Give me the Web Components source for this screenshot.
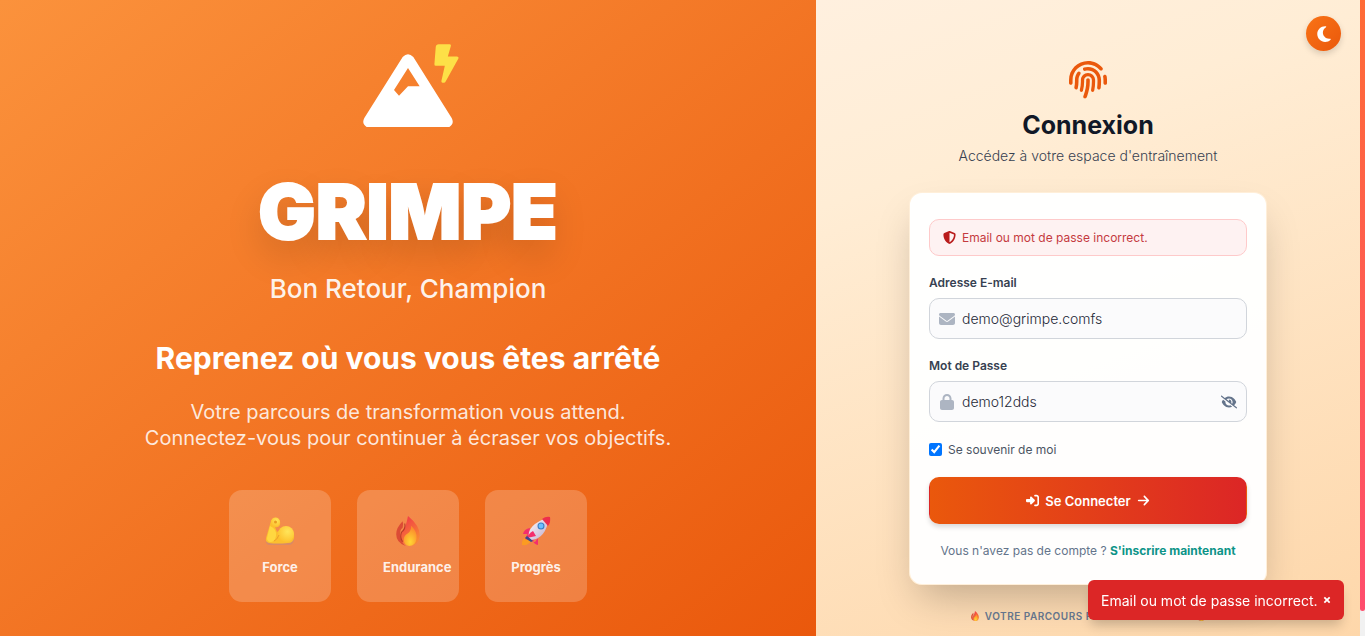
<!DOCTYPE html>
<html lang="fr">
<head>
<meta charset="utf-8">
<meta name="viewport" content="width=device-width, initial-scale=1">
<title>Grimpe – Connexion</title>
<style>
html, body { margin: 0; }
body { font-family: Inter, "Open Sans", sans-serif; overflow: hidden; background: #f1f1f1; }
</style>
</head>
<body>
<login-page></login-page>
<script>
/* Registers an element; setup fills the markup in before it goes live */
const define = (name, html, setup) => {
  const template = document.createElement('template');
  template.innerHTML = html;
  customElements.define(name, class extends HTMLElement {
    connectedCallback() {
      if (this.shadowRoot) return;
      const content = template.content.cloneNode(true);
      if (setup) setup(this, content);
      this.attachShadow({ mode: 'open' }).append(content);
    }
  });
};

const ICONS = {
  moon: ['0 0 384 512', '<path d="M223.5 32C100 32 0 132.3 0 256S100 480 223.5 480c60.6 0 115.5-24.2 155.8-63.4c5-4.9 6.3-12.5 3.1-18.7s-10.1-9.7-17-8.5c-9.8 1.7-19.8 2.6-30.1 2.6c-96.9 0-175.5-78.8-175.5-176c0-65.8 36-123.1 89.3-153.3c6.1-3.5 9.2-10.5 7.7-17.3s-7.3-11.9-14.3-12.5c-6.3-.5-12.6-.8-19-.8z"/>'],
  envelope: ['0 0 512 512', '<path d="M48 64C21.500 64 0 85.500 0 112c0 15.100 7.100 29.300 19.200 38.400L236.800 313.600c11.400 8.500 27 8.500 38.400 0L492.800 150.400c12.100-9.100 19.200-23.300 19.200-38.400c0-26.500-21.500-48-48-48H48zM0 176V384c0 35.300 28.700 64 64 64H448c35.300 0 64-28.700 64-64V176L294.400 339.200c-22.800 17.100-54 17.100-76.800 0L0 176z"/>'],
  lock: ['0 0 448 512', '<path d="M144 144v48H304V144c0-44.200-35.800-80-80-80s-80 35.800-80 80zM80 192V144C80 64.500 144.500 0 224 0s144 64.500 144 144v48h16c35.300 0 64 28.700 64 64V448c0 35.300-28.700 64-64 64H64c-35.300 0-64-28.700-64-64V256c0-35.300 28.700-64 64-64H80z"/>'],
  arrow: ['0 0 448 512', '<path d="M438.600 278.600c12.500-12.500 12.500-32.800 0-45.300l-160-160c-12.500-12.500-32.800-12.500-45.300 0s-12.500 32.800 0 45.300L338.800 224 32 224c-17.700 0-32 14.300-32 32s14.300 32 32 32l306.700 0L233.400 393.400c-12.500 12.500-12.500 32.800 0 45.300s32.800 12.500 45.300 0l160-160z"/>'],
  enter: ['0 0 512 512', '<path d="M217.900 105.900L340.700 228.700c7.200 7.200 11.300 17.100 11.300 27.300s-4.100 20.100-11.300 27.300L217.900 406.100c-6.400 6.400-15 9.900-24 9.900c-18.700 0-33.900-15.200-33.900-33.900l0-62.100L32 320c-17.700 0-32-14.300-32-32l0-64c0-17.700 14.300-32 32-32l128 0 0-62.100c0-18.700 15.200-33.900 33.900-33.900c9 0 17.600 3.600 24 9.900zM352 416l64 0c17.700 0 32-14.300 32-32l0-256c0-17.700-14.300-32-32-32l-64 0c-17.700 0-32-14.300-32-32s14.300-32 32-32l64 0c53 0 96 43 96 96l0 256c0 53-43 96-96 96l-64 0c-17.700 0-32-14.300-32-32s14.300-32 32-32z"/>'],
  shield: ['0 0 512 512', '<path d="M256 0c4.600 0 9.200 1 13.400 2.900L457.700 82.800c22 9.300 38.400 31 38.300 57.200c-.5 99.200-41.300 280.700-213.600 363.200c-16.700 8-36.100 8-52.800 0C57.300 420.700 16.500 239.200 16 140c-.1-26.200 16.300-47.900 38.300-57.200L242.700 2.900C246.800 1 251.400 0 256 0zm0 66.800V444.800C394 378 431.100 230.100 432 141.400L256 66.800z"/>'],
  eyeoff: ['0 0 640 512', '<path d="M38.800 5.100C28.400-3.100 13.300-1.200 5.100 9.200S-1.200 34.700 9.200 42.900l592 464c10.400 8.200 25.500 6.300 33.700-4.100s6.300-25.500-4.100-33.700L525.600 386.700c39.600-40.600 66.400-86.100 79.900-118.400c3.300-7.900 3.300-16.700 0-24.600c-14.900-35.700-46.200-87.700-93-131.100C465.500 68.800 400.800 32 320 32c-68.200 0-125 26.300-169.300 60.800L38.800 5.100zM223.100 149.500C248.600 126.200 282.700 112 320 112c79.500 0 144 64.500 144 144c0 24.900-6.300 48.300-17.400 68.700L408 294.500c8.400-19.300 10.600-41.400 4.800-63.300c-11.100-41.500-47.800-69.400-88.600-71.100c-5.800-.2-9.200 6.100-7.400 11.700c2.100 6.400 3.300 13.200 3.300 20.300c0 10.200-2.400 19.800-6.600 28.300l-90.300-70.800zM373 389.900c-16.400 6.500-34.300 10.100-53 10.100c-79.500 0-144-64.500-144-144c0-6.900 .5-13.600 1.400-20.200L83.100 161.500C60.300 191.200 44 220.800 34.500 243.700c-3.300 7.900-3.300 16.700 0 24.600c14.900 35.700 46.200 87.700 93 131.100C174.500 443.200 239.200 480 320 480c47.800 0 89.900-12.900 126.200-32.500L373 389.900z"/>'],
  fingerprint: ['0 0 512 512', '<path d="M48 256C48 141.100 141.100 48 256 48c63.100 0 119.600 28.100 157.800 72.500c8.600 10.100 23.800 11.200 33.800 2.600s11.200-23.800 2.600-33.800C403.300 34.600 333.700 0 256 0C114.600 0 0 114.600 0 256v40c0 13.300 10.700 24 24 24s24-10.700 24-24V256zm458.500-52.900c-2.700-13-15.500-21.300-28.400-18.500s-21.300 15.500-18.500 28.400c2.900 13.900 4.500 28.300 4.500 43.100v40c0 13.300 10.700 24 24 24s24-10.700 24-24V256c0-18.100-1.900-35.800-5.500-52.900zM256 80c-19 0-37.400 3-54.500 8.600c-15.200 5-18.700 23.700-8.300 35.900c7.100 8.300 18.800 10.800 29.400 7.900c10.600-2.900 21.800-4.400 33.400-4.400c70.700 0 128 57.300 128 128v24.900c0 25.200-1.500 50.300-4.400 75.300c-1.700 14.600 9.400 27.800 24.200 27.800c11.800 0 21.900-8.600 23.300-20.300c3.300-27.400 5-55 5-82.700V256c0-97.200-78.800-176-176-176zM150.700 148.700c-9.100-10.600-25.300-11.400-33.900-.4C93.700 178 80 215.400 80 256v24.900c0 24.200-2.600 48.400-7.800 71.900C68.800 368.400 80.100 384 96.100 384c10.500 0 19.900-7 22.200-17.300c6.400-28.100 9.700-56.800 9.700-85.800V256c0-27.200 8.500-52.400 22.900-73.100c7.200-10.400 8-24.600-.2-34.200zM256 160c-53 0-96 43-96 96v24.900c0 35.900-4.600 71.500-13.800 106.100c-3.800 14.300 6.700 29 21.500 29c9.500 0 17.900-6.200 20.400-15.400c10.500-39 15.900-79.200 15.900-119.700V256c0-28.700 23.300-52 52-52s52 23.300 52 52v24.900c0 36.300-3.500 72.400-10.400 107.900c-2.700 13.900 7.700 27.200 21.800 27.200c10.200 0 19-7 21-17c7.700-38.800 11.600-78.300 11.600-118.100V256c0-53-43-96-96-96zm24 96c0-13.300-10.700-24-24-24s-24 10.700-24 24v24.900c0 59.900-11 119.300-32.500 175.200l-5.900 15.300c-4.800 12.400 1.400 26.300 13.800 31s26.300-1.400 31-13.800l5.900-15.300C267.900 411.900 280 346.700 280 280.900V256z"/>'],
  mountain: ['0 0 270 219', '<path fill-rule="evenodd" d="M119 9Q135-7 151 9L266 192Q275 209 259 219H11Q-5 209 4 192ZM135 42L93 108 108 125 135 97H170Z"/>'],
  bolt: ['0 0 72 116', '<path d="M13 1H45Q50 1 49 6L40 37H67Q74 38 71 44L33 112Q31 116 27 115H24Q20 114 21 109L31 65H4Q0 65 0 60L4 9Q5 1 13 1Z"/>'],
  close: ['0 0 12 12', '<path d="M2 2 10 10M10 2 2 10" stroke="currentColor" stroke-width="2.600" fill="none"/>'],
  arm: ['0 0 30 28', '<defs><radialGradient id="a" cx=".6" cy=".35" r=".7"><stop stop-color="#ffe55a"/><stop offset="1" stop-color="#fdc02c"/></radialGradient></defs><path fill="#d98a66" d="M1 22H29Q29 28 23 28H5Q0 28 1 22Z"/><path fill="#fcbf2e" d="M6 4Q8 0 12 1Q16 3 15 8Q13 11 10 10L12 15L15 13Q20 8 25 11Q30 15 29 21Q28 26 23 26Q12 27 4 26Q0 25 1 21Z"/><path fill="#ffd740" d="M5 9Q12 12 11 19Q10 25 5 25Q2 24 2 21Z"/><circle cx="21" cy="17" r="8" fill="url(#a)"/><path d="M9 24Q12 23 14 18" stroke="#eda02c" fill="none"/><circle cx="10.500" cy="5" r="4.500" fill="url(#a)"/><circle cx="10.500" cy="5" r="1.500" fill="#e99b20"/>'],
  fire: ['0 0 22 28', '<defs><linearGradient id="f" x1="0" x2=".5" y2="1"><stop stop-color="#f0304a"/><stop offset="1" stop-color="#f98a32"/></linearGradient><radialGradient id="g" cx=".5" cy=".8" r=".7"><stop stop-color="#ffd633"/><stop offset="1" stop-color="#fb8c2c"/></radialGradient></defs><path fill="#dc4b35" d="M6 5Q7 8 6 11Q3 13 4 18Q4 24 9 28Q0 25 0 17Q0 11 6 5Z"/><path fill="url(#f)" d="M11 0Q22 9 22 18Q21 28 12 28Q4 26 4 18Q5 14 8 11Q10 6 11 0Z"/><path fill="url(#g)" d="M14 9Q20 15 19 21Q18 28 12 28Q7 27 7 22Q7 18 11 16Q14 14 14 9Z"/><path d="M8 7Q9 12 5 15Q3 20 6 24" fill="none" stroke="#b83a28" stroke-width="1"/>'],
  rocket: ['0 0 30 30', '<defs><linearGradient id="r" x1="0" y1="0" x2="1" y2="1"><stop stop-color="#fff"/><stop offset="1" stop-color="#bda8c9"/></linearGradient></defs><path fill="#fb9b22" d="M6 21Q0 23 1 29Q7 30 10 25Z"/><path fill="#f42e6c" d="M9 12Q3 13 2 18L8 18ZM17 21L17 29Q13 28 12 25ZM8 15 4 23 14 26 19 19Z"/><path fill="url(#r)" d="M8 22Q5 9 28 1Q25 23 10 24Z"/><path fill="#ee2e4c" d="M21 3Q25 0 29 1Q30 6 27 10Z"/><circle cx="20" cy="10" r="3.500" fill="#3b7fc4"/><circle cx="20" cy="10" r="2.400" fill="#6cc0ff"/><path fill="#f42e6c" d="M12 15Q8 17 6 22L15 20Z"/><path fill="#354a8e" d="M6 20 12 25 10 26 4 22Z"/>']
};

/* ui-icon: inherits its colour; --w and --h give its box */
define('ui-icon', `<style>
  :host { display: inline-block; flex: none; width: var(--w, 16px); height: var(--h, 16px); }
  div { height: 100%; }
  svg { display: block; width: 100%; height: 100%; fill: currentColor; }
</style><div></div>`, (host, content) => {
  const [box, body] = ICONS[host.getAttribute('name')];
  content.querySelector('div').innerHTML = `<svg viewBox="${box}" aria-hidden="true">${body}</svg>`;
});

define('stat-tile', `<style>
  :host { display: flex; flex-direction: column; align-items: center; box-sizing: border-box; width: 102px; height: 112px;
    padding: 26px; border-radius: 13px; background: rgba(255,255,255,.2); }
  ui-icon { --w: 30px; --h: 30px; }
  span { display: block; width: 100%; margin-top: 11px; font-size: 13px; line-height: 20px; font-weight: 700; color: rgba(255,255,255,.9); text-align: center; }
</style><ui-icon></ui-icon><span><slot></slot></span>`, (host, content) => {
  content.querySelector('ui-icon').setAttribute('name', host.getAttribute('icon'));
});

define('hero-panel', `<style>
  :host { display: flex; flex-direction: column; align-items: center; padding-top: 44px; color: #fff; text-align: center;
    background: linear-gradient(to bottom right, #fb923c, #ea580c); }
  .logo { position: relative; width: 90px; height: 73px; padding-top: 10px; --w: 90px; --h: 73px; }
  .bolt { position: absolute; top: 0; right: -6px; --w: 25px; --h: 39px; color: #fde047; }
  h1, h2, p { margin: 0; }
  h1 { margin-top: 42px; font-size: 76px; line-height: 84px; font-weight: 900; -webkit-text-stroke: 2px #fff; text-shadow: 0 16px 36px rgba(0,0,0,.16); }
  .welcome { margin-top: 18px; font-size: 26px; line-height: 36px; font-weight: 500; color: rgba(255,255,255,.92); }
  h2 { margin-top: 33px; font-size: 30px; line-height: 36px; font-weight: 700; }
  .lead { margin-top: 23px; font-size: 20px; line-height: 26px; color: rgba(255,255,255,.85); }
  .tiles { display: flex; gap: 26px; margin-top: 39px; }
</style>
<div class="logo"><ui-icon name="mountain"></ui-icon><ui-icon class="bolt" name="bolt"></ui-icon></div>
<h1>GRIMPE</h1>
<p class="welcome">Bon Retour, Champion</p>
<h2>Reprenez où vous vous êtes arrêté</h2>
<p class="lead">Votre parcours de transformation vous attend.<br>Connectez-vous pour continuer à écraser vos objectifs.</p>
<div class="tiles"><stat-tile icon="arm">Force</stat-tile><stat-tile icon="fire">Endurance</stat-tile><stat-tile icon="rocket">Progrès</stat-tile></div>`);

define('form-field', `<style>
  :host { display: block; }
  label { display: block; font-size: 12px; line-height: 18px; font-weight: 600; color: #374151; }
  .box { display: flex; align-items: center; gap: 7px; box-sizing: border-box; height: 41px; margin-top: 6px; padding: 0 9px;
    border: 1px solid #d1d5db; border-radius: 10px; background: #fbfbfc; }
  .lead { color: #adb5c2; --w: 16px; --h: 16px; }
  input { flex: 1; min-width: 0; padding: 0; border: 0; outline: 0; background: none; font: 300 14px/20px Inter, "Open Sans", sans-serif; color: #1f2937; }
  button { display: grid; padding: 0; border: 0; background: none; color: #64748b; --w: 16px; --h: 14px; }
</style><label for="field"></label><div class="box"><ui-icon class="lead"></ui-icon><input id="field"></div>`, (host, content) => {
  content.querySelector('label').textContent = host.getAttribute('label');
  content.querySelector('.lead').setAttribute('name', host.getAttribute('icon'));
  content.querySelector('input').setAttribute('value', host.getAttribute('value'));
  if (host.hasAttribute('revealable')) {
    const button = document.createElement('button');
    button.type = 'button';
    button.setAttribute('aria-label', 'Masquer le mot de passe');
    button.innerHTML = '<ui-icon name="eyeoff"></ui-icon>';
    content.querySelector('.box').append(button);
  }
});

define('login-card', `<style>
  :host { display: block; box-sizing: border-box; padding: 26px 19px 23px; border: 1px solid rgba(255,237,213,.9); border-radius: 13px;
    background: rgba(255,255,255,.97); box-shadow: 0 20px 40px -10px rgba(0,0,0,.25); }
  .alert { display: flex; align-items: center; gap: 6px; box-sizing: border-box; height: 37px; margin-bottom: 18px; padding: 0 13px;
    border: 1px solid #fecaca; border-radius: 10px; background: #fef2f2; color: #c53a3f; font-size: 12px; --w: 13px; --h: 13px; }
  .alert ui-icon { color: #b91c1c; }
  form-field { margin-bottom: 18px; }
  .remember { display: flex; align-items: center; gap: 6px; height: 18px; font-size: 12px; color: #4b5563; }
  .remember input { width: 13px; height: 13px; margin: 0; accent-color: #0075ff; }
  .submit { display: flex; align-items: center; justify-content: center; gap: 6px; box-sizing: border-box; width: 100%; height: 47px; margin: 19px 0 17px; padding: 0; border: 1px solid transparent;
    border-radius: 10px; background: linear-gradient(90deg, #ea580c, #dc2626); color: #fff; font: 600 13px/20px Inter, "Open Sans", sans-serif;
    box-shadow: 0 3px 5px rgba(0,0,0,.15); --w: 13px; --h: 13px; }
  p { margin: 0; font-size: 12px; line-height: 20px; text-align: center; color: #64748b; }
  a { color: #0d9488; font-weight: 700; text-decoration: none; }
</style>
<div class="alert" role="alert"><ui-icon name="shield"></ui-icon><span>Email ou mot de passe incorrect.</span></div>
<form-field label="Adresse E-mail" icon="envelope" value="demo@grimpe.comfs"></form-field>
<form-field label="Mot de Passe" icon="lock" value="demo12dds" revealable></form-field>
<label class="remember"><input type="checkbox" checked><span>Se souvenir de moi</span></label>
<button class="submit" type="button"><ui-icon name="enter"></ui-icon><span>Se Connecter</span><ui-icon name="arrow"></ui-icon></button>
<p>Vous n'avez pas de compte ? <a href="#inscription">S'inscrire maintenant</a></p>`);

define('login-panel', `<style>
  :host { position: relative; display: flex; flex-direction: column; align-items: center; padding-top: 61px;
    background: linear-gradient(160deg, #fff0df, #ffedd5 25%, #fed7aa); }
  .theme { position: absolute; top: 16px; right: 19px; display: grid; place-items: center; width: 35px; height: 35px; padding: 0; border: 0;
    border-radius: 50%; color: #fff; background: linear-gradient(135deg, #f97316, #ea580c); box-shadow: 0 3px 6px rgba(0,0,0,.15); --w: 16px; --h: 18px; }
  .print { color: #ea580c; --w: 38px; --h: 38px; }
  h1 { margin: 10px 0 0; font-size: 25px; line-height: 32px; font-weight: 700; color: #111827; }
  .sub { margin: 5px 0 26px; font-size: 14px; line-height: 20px; font-weight: 300; color: #374151; }
  login-card { width: 358px; max-width: 100%; }
  footer { display: flex; align-items: center; gap: 5px; margin-top: 21px; font-size: 10px; line-height: 20px; font-weight: 600; letter-spacing: .5px; color: #64748b; --w: 10px; --h: 10px; }
</style>
<button class="theme" type="button" aria-label="Thème sombre"><ui-icon name="moon"></ui-icon></button>
<ui-icon class="print" name="fingerprint"></ui-icon>
<h1>Connexion</h1>
<p class="sub">Accédez à votre espace d'entraînement</p>
<login-card></login-card>
<footer><ui-icon name="fire"></ui-icon><span>VOTRE PARCOURS FITNESS CONTINUE</span><ui-icon name="fire"></ui-icon></footer>`);

define('toast-note', `<style>
  :host { position: fixed; right: 21px; bottom: 16px; z-index: 1; display: flex; align-items: center; justify-content: space-between; box-sizing: border-box; width: 256px; height: 40px; padding: 0 13px;
    border-radius: 6px; background: #dc2626; color: #fff; font-size: 14px; box-shadow: 0 8px 12px -3px rgba(0,0,0,.2); }
  button { display: grid; padding: 0; border: 0; background: none; color: #fff; --w: 8px; --h: 8px; }
</style><span><slot></slot></span><button type="button" aria-label="Fermer"><ui-icon name="close"></ui-icon></button>`);

define('scroll-rail', `<style>
  :host { display: block; background: #f1f1f1; }
  div { height: 96%; border-radius: 0 0 3px 3px; background: linear-gradient(#ff6b35, #ff4d6d); }
</style><div></div>`);

define('login-page', `<style>
  :host { display: grid; grid-template-columns: minmax(0, 3fr) minmax(0, 2fr) 5px; height: 100vh; overflow: hidden; }
</style><hero-panel></hero-panel><login-panel></login-panel><scroll-rail></scroll-rail>
<toast-note>Email ou mot de passe incorrect.</toast-note>`);
</script>
</body>
</html>
